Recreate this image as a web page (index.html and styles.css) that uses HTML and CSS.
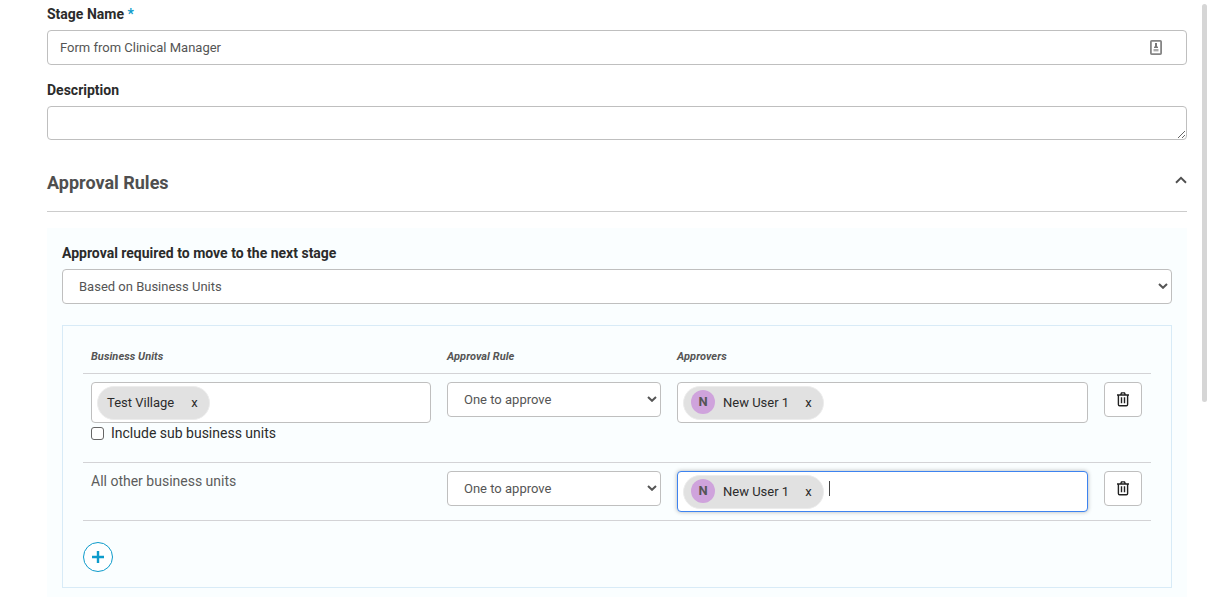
FILE: index.html
```html
<!DOCTYPE html>
<html lang="en">
<head>
  <meta charset="UTF-8" />
  <meta name="viewport" content="width=device-width, initial-scale=1.0" />
  <title>Stage</title>
  <link rel="stylesheet" href="styles.css">
</head>
<body>
  <svg class="sprite" width="0" height="0">
    <symbol id="chevron" viewBox="0 0 10 6">
      <path d="M1 1l4 3.8L9 1" fill="none" stroke="currentColor" stroke-width="2" />
    </symbol>
    <symbol id="trash" viewBox="0 0 12 15">
      <path d="M0 3h12M3.7 2.8l.8-1.9h3l.8 1.9M1.4 3v9.6q0 1.2 1.2 1.2h6.8q1.2 0 1.2-1.2V3M4.5 5.3v6M7.5 5.3v6" fill="none" stroke="currentColor" stroke-width="1.4" />
    </symbol>
  </svg>

  <form class="page">
    <div class="field">
      <label class="label" for="stageName">Stage Name <span class="required">*</span></label>
      <div class="control">
        <input type="text" class="input" id="stageName" value="Form from Clinical Manager">
        <svg class="autofill" width="12" height="15" viewBox="0 0 12 15">
          <rect x=".9" y=".9" width="10.2" height="13.2" rx=".8" fill="#fff" stroke="#858585" stroke-width="1.8" />
          <path d="M6 3v2M6 4.5v3" stroke="#777" stroke-width="2" />
          <path d="M4 7.3h4" stroke="#777" stroke-width="1.4" />
          <path d="M3.5 10.2h5" stroke="#aaa" stroke-width="2.4" />
        </svg>
      </div>
    </div>

    <div class="field">
      <label class="label" for="description">Description</label>
      <textarea class="textarea" id="description"></textarea>
    </div>

    <div class="section-header">
      <h2>Approval Rules</h2>
      <svg class="collapse" width="12" height="8" viewBox="0 0 12 8">
        <path d="M1 6.8l5-4.9 5 4.9" fill="none" stroke="currentColor" stroke-width="1.9" />
      </svg>
    </div>

    <div class="panel">
      <label class="label" for="approvalType">Approval required to move to the next stage</label>
      <div class="control">
        <select class="select" id="approvalType"><option>Based on Business Units</option></select>
        <svg class="arrow"><use href="#chevron" /></svg>
      </div>

      <div class="rules">
        <div class="row row-head">
          <div>Business Units</div>
          <div>Approval Rule</div>
          <div>Approvers</div>
        </div>

        <div class="row">
          <div>
            <div class="tags">
              <span class="tag"><span>Test Village</span><span class="remove">x</span></span>
            </div>
            <label class="checkbox"><input type="checkbox"><span>Include sub business units</span></label>
          </div>
          <div class="control">
            <select class="select"><option>One to approve</option></select>
            <svg class="arrow"><use href="#chevron" /></svg>
          </div>
          <div class="tags">
            <span class="tag tag-user"><span class="avatar">N</span><span>New User 1</span><span class="remove">x</span></span>
          </div>
          <button type="button" class="delete-btn"><svg width="12" height="15"><use href="#trash" /></svg></button>
        </div>

        <div class="row row-other">
          <div class="other">All other business units</div>
          <div class="control">
            <select class="select"><option>One to approve</option></select>
            <svg class="arrow"><use href="#chevron" /></svg>
          </div>
          <div class="tags focused">
            <span class="tag tag-user"><span class="avatar">N</span><span>New User 1</span><span class="remove">x</span></span>
            <span class="caret"></span>
          </div>
          <button type="button" class="delete-btn"><svg width="12" height="15"><use href="#trash" /></svg></button>
        </div>

        <button type="button" class="add-btn">
          <svg width="12" height="12" viewBox="0 0 12 12"><path d="M6 0v12M0 6h12" stroke="currentColor" stroke-width="2.4" /></svg>
        </button>
      </div>
    </div>
  </form>

  <div class="scrollbar"></div>
</body>
</html>
```
FILE: styles.css
```css
* {
  box-sizing: border-box;
}

body {
  margin: 0;
  height: 597px;
  display: flex;
  overflow: hidden;
  background: #fff;
  color: #2b2b2b;
  font-family: Roboto, Arial, sans-serif;
  font-size: 14px;
  line-height: 20px;
}

.sprite {
  position: absolute;
}

.page {
  width: 1140px;
  margin-left: 47px;
  padding-top: 4px;
  flex-shrink: 0;
}

.field {
  margin-bottom: 15px;
}

.label {
  display: block;
  height: 26px;
  font-weight: 700;
}

.required {
  color: #0d9bcb;
}

.control {
  position: relative;
}

.input,
.textarea,
.select {
  display: block;
  width: 100%;
  height: 35px;
  margin: 0;
  padding: 0 12px;
  border: 1px solid #bfbfbf;
  border-radius: 4px;
  background: #fff;
  color: #555;
  font-family: inherit;
  font-size: 13px;
  outline: none;
}

.textarea {
  height: 34px;
}

.select {
  appearance: none;
  padding: 0 16px;
}

.autofill {
  position: absolute;
  top: 10px;
  right: 25px;
}

.arrow {
  position: absolute;
  top: 14px;
  right: 4px;
  width: 10px;
  height: 6px;
  color: #555;
}

.section-header {
  display: flex;
  justify-content: space-between;
  margin-top: 18px;
  height: 54px;
  padding-top: 15px;
  border-bottom: 1px solid #ccc;
  color: #4f4f4f;
}

.section-header h2 {
  margin: 0;
  font-size: 18px;
  line-height: 20px;
}

.collapse {
  margin-top: 3px;
}

.panel {
  height: 370px;
  margin-top: 16px;
  padding: 15px;
  background: #fafeff;
}

.rules {
  height: 263px;
  margin-top: 21px;
  padding: 20px;
  border: 1px solid #d8ebf7;
}

.row {
  display: grid;
  grid-template-columns: 340px 214px 411px 38px;
  column-gap: 16px;
  align-items: start;
  height: 89px;
  padding: 8px 8px 0;
  border-bottom: 1px solid #d3d3d6;
}

.row-head {
  height: 28px;
  padding-top: 1px;
  color: #555;
  font-size: 11px;
  font-style: italic;
  font-weight: 700;
  letter-spacing: 0.06px;
}

.row-other {
  height: 58px;
}

.other {
  color: #5c5c5c;
}

.tags {
  display: flex;
  height: 41px;
  padding: 3px 5px;
  border: 1px solid #bfbfbf;
  border-radius: 4px;
  background: #fff;
}

.focused {
  border-color: #3d83f0;
  box-shadow: 0 0 4px rgba(0, 0, 0, 0.3);
}

.tag {
  display: flex;
  align-items: center;
  height: 34px;
  padding: 0 11px 1px 9px;
  border: 1px solid #ececec;
  border-radius: 17px;
  background: #e1e1e1;
  font-size: 13px;
}

.tag-user {
  padding-left: 7px;
}

.avatar {
  width: 24px;
  height: 24px;
  margin: 0 8px 1px 0;
  border-radius: 50%;
  background: #cfa3dc;
  color: #555;
  font-size: 13px;
  font-weight: 700;
  line-height: 24px;
  text-align: center;
}

.remove {
  margin-left: 17px;
}

.tag-user .remove {
  margin-left: 16px;
}

.caret {
  width: 1px;
  height: 15px;
  margin: 6px 0 0 5px;
  background: #444;
}

.checkbox {
  display: flex;
  align-items: center;
}

.checkbox input {
  appearance: none;
  width: 13px;
  height: 13px;
  margin: 0 7px 0 0;
  border: 1px solid #666;
  border-radius: 3px;
  background: #fff;
}

.delete-btn {
  display: flex;
  align-items: center;
  justify-content: center;
  width: 38px;
  height: 35px;
  padding: 0 0 1px;
  border: 1px solid #bfbfbf;
  border-radius: 4px;
  background: #fff;
  color: #222;
}

.add-btn {
  display: flex;
  align-items: center;
  justify-content: center;
  width: 30px;
  height: 30px;
  margin-top: 21px;
  padding: 0;
  border: 1px solid #0d9bcb;
  border-radius: 50%;
  background: #fff;
  color: #0d9bcb;
}

.scrollbar {
  width: 5px;
  height: 398px;
  margin: 4px 0 0 15px;
  border-radius: 3px;
  background: #d6d6d6;
}
```
